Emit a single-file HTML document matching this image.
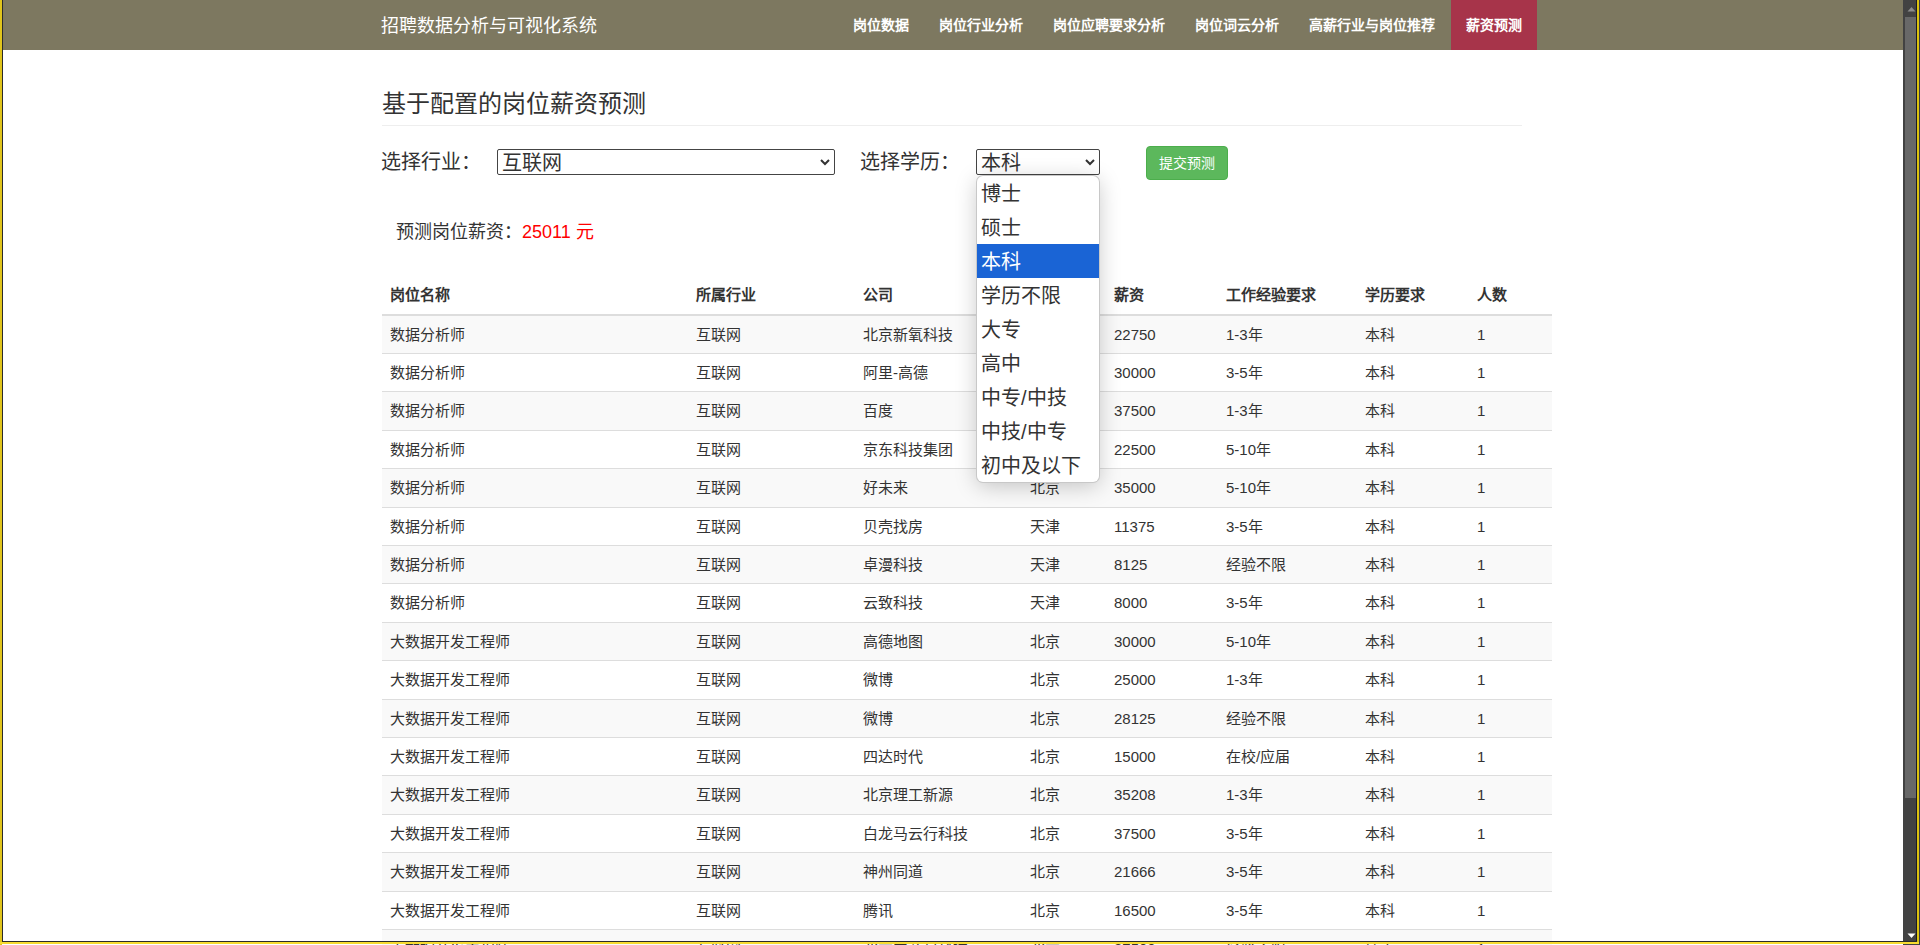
<!DOCTYPE html>
<html lang="zh-CN">
<head>
<meta charset="utf-8">
<style>
html,body{margin:0;padding:0;}
body{width:1920px;height:945px;overflow:hidden;position:relative;background:#fff;font-family:"Liberation Sans",sans-serif;color:#333;}
.abs{position:absolute;white-space:nowrap;}
#nav{position:absolute;left:3px;top:0;width:1900px;height:50px;background:#7d7860;}
.brand{position:absolute;left:381px;top:13.5px;font-size:18px;line-height:24px;color:#fff;}
.ni{position:absolute;top:0;height:50px;line-height:51px;font-size:14px;font-weight:bold;color:#fff;}
.ni.act{background:#a7344a;}
.title{position:absolute;left:382px;top:89px;font-size:24px;line-height:30px;color:#333;}
.hr{position:absolute;left:382px;top:125px;width:1140px;height:1px;background:#eee;}
.lbl{position:absolute;font-size:20px;line-height:26px;color:#333;margin-top:1px;}
.sel{position:absolute;box-sizing:border-box;height:26px;border:1px solid #444;border-radius:2px;background:#fff;font-size:20px;line-height:26px;padding-left:4px;color:#333;}
.chev{position:absolute;right:4px;top:8px;}
.btn{position:absolute;left:1146px;top:146px;width:82px;height:34px;box-sizing:border-box;border:1px solid #4cae4c;background:#5cb85c;border-radius:4px;color:#fff;font-size:14px;line-height:32px;text-align:center;}
.pred{position:absolute;left:396px;top:218.7px;font-size:18px;line-height:26px;color:#333;}
.pred span{color:#f00;}
table{position:absolute;left:382px;top:276.1px;width:1170px;border-collapse:collapse;border-spacing:0;font-size:15px;line-height:21.4px;}
th{text-align:left;font-weight:bold;padding:8px;border-bottom:2px solid #ddd;vertical-align:bottom;}
td{padding:8px;border-top:1px solid #ddd;vertical-align:top;}
tbody tr:nth-child(odd) td{background:#f9f9f9;}
#dd{position:absolute;left:977px;top:176px;width:122px;height:306px;box-sizing:border-box;background:#fff;border-radius:6px;box-shadow:0 0 0 1px #c8c8c8,0 4px 22px rgba(0,0,0,0.22);overflow:hidden;}
#dd div{height:34px;line-height:36px;font-size:20px;padding-left:4px;color:#333;}
#dd div.hl{background:#1a64d5;color:#fff;}
#frame-l{position:absolute;left:0;top:0;width:2px;height:945px;background:#e0c41c;}
#frame-l2{position:absolute;left:2px;top:0;width:1px;height:942px;background:#2a2a2a;}
#frame-b{position:absolute;left:0;top:942px;width:1919px;height:2px;background:#f8dc30;}
#frame-b2{position:absolute;left:2px;top:941px;width:1915px;height:1px;background:#2a2a2a;}
#frame-r{position:absolute;left:1917px;top:0;width:2px;height:944px;background:#dcc20e;}
#frame-r2{position:absolute;left:1916px;top:0;width:1px;height:942px;background:#1a1a22;}
#frame-r3{position:absolute;left:1919px;top:0;width:1px;height:945px;background:#3a3a44;}
#sb{position:absolute;left:1903px;top:0;width:17px;height:945px;background:#424242;}
#thumb{position:absolute;left:1905px;top:17px;width:13px;height:781px;background:#686868;}
#up{position:absolute;left:1907px;top:6px;}
#down{position:absolute;left:1907px;top:933px;}
</style>
</head>
<body>
<div id="nav">
</div>
<div class="brand abs">招聘数据分析与可视化系统</div>
<div class="ni abs" style="left:838px;padding:0 15px;">岗位数据</div>
<div class="ni abs" style="left:924px;padding:0 15px;">岗位行业分析</div>
<div class="ni abs" style="left:1038px;padding:0 15px;">岗位应聘要求分析</div>
<div class="ni abs" style="left:1180px;padding:0 15px;">岗位词云分析</div>
<div class="ni abs" style="left:1294px;padding:0 15px;">高薪行业与岗位推荐</div>
<div class="ni abs act" style="left:1451px;padding:0 15px;width:56px;">薪资预测</div>

<div class="title abs">基于配置的岗位薪资预测</div>
<div class="hr"></div>

<div class="lbl abs" style="left:381px;top:148px;">选择行业：</div>
<div class="sel abs" style="left:497px;top:149px;width:338px;">互联网<svg class="chev" width="10" height="8" viewBox="0 0 10 8"><path d="M1 2 L5 6 L9 2" stroke="#333" stroke-width="2" fill="none"/></svg></div>
<div class="lbl abs" style="left:860px;top:148px;">选择学历：</div>
<div class="sel abs" style="left:976px;top:149px;width:124px;">本科<svg class="chev" width="10" height="8" viewBox="0 0 10 8"><path d="M1 2 L5 6 L9 2" stroke="#333" stroke-width="2" fill="none"/></svg></div>
<div class="btn">提交预测</div>

<div class="pred abs">预测岗位薪资：<span>25011 元</span></div>

<table>
<colgroup><col style="width:306px"><col style="width:167px"><col style="width:167px"><col style="width:84px"><col style="width:112px"><col style="width:139px"><col style="width:112px"><col style="width:83px"></colgroup>
<thead><tr><th>岗位名称</th><th>所属行业</th><th>公司</th><th>城市</th><th>薪资</th><th>工作经验要求</th><th>学历要求</th><th>人数</th></tr></thead>
<tbody>
<tr><td>数据分析师</td><td>互联网</td><td>北京新氧科技</td><td>北京</td><td>22750</td><td>1-3年</td><td>本科</td><td>1</td></tr>
<tr><td>数据分析师</td><td>互联网</td><td>阿里-高德</td><td>北京</td><td>30000</td><td>3-5年</td><td>本科</td><td>1</td></tr>
<tr><td>数据分析师</td><td>互联网</td><td>百度</td><td>北京</td><td>37500</td><td>1-3年</td><td>本科</td><td>1</td></tr>
<tr><td>数据分析师</td><td>互联网</td><td>京东科技集团</td><td>北京</td><td>22500</td><td>5-10年</td><td>本科</td><td>1</td></tr>
<tr><td>数据分析师</td><td>互联网</td><td>好未来</td><td>北京</td><td>35000</td><td>5-10年</td><td>本科</td><td>1</td></tr>
<tr><td>数据分析师</td><td>互联网</td><td>贝壳找房</td><td>天津</td><td>11375</td><td>3-5年</td><td>本科</td><td>1</td></tr>
<tr><td>数据分析师</td><td>互联网</td><td>卓漫科技</td><td>天津</td><td>8125</td><td>经验不限</td><td>本科</td><td>1</td></tr>
<tr><td>数据分析师</td><td>互联网</td><td>云致科技</td><td>天津</td><td>8000</td><td>3-5年</td><td>本科</td><td>1</td></tr>
<tr><td>大数据开发工程师</td><td>互联网</td><td>高德地图</td><td>北京</td><td>30000</td><td>5-10年</td><td>本科</td><td>1</td></tr>
<tr><td>大数据开发工程师</td><td>互联网</td><td>微博</td><td>北京</td><td>25000</td><td>1-3年</td><td>本科</td><td>1</td></tr>
<tr><td>大数据开发工程师</td><td>互联网</td><td>微博</td><td>北京</td><td>28125</td><td>经验不限</td><td>本科</td><td>1</td></tr>
<tr><td>大数据开发工程师</td><td>互联网</td><td>四达时代</td><td>北京</td><td>15000</td><td>在校/应届</td><td>本科</td><td>1</td></tr>
<tr><td>大数据开发工程师</td><td>互联网</td><td>北京理工新源</td><td>北京</td><td>35208</td><td>1-3年</td><td>本科</td><td>1</td></tr>
<tr><td>大数据开发工程师</td><td>互联网</td><td>白龙马云行科技</td><td>北京</td><td>37500</td><td>3-5年</td><td>本科</td><td>1</td></tr>
<tr><td>大数据开发工程师</td><td>互联网</td><td>神州同道</td><td>北京</td><td>21666</td><td>3-5年</td><td>本科</td><td>1</td></tr>
<tr><td>大数据开发工程师</td><td>互联网</td><td>腾讯</td><td>北京</td><td>16500</td><td>3-5年</td><td>本科</td><td>1</td></tr>
<tr><td>大数据开发工程师</td><td>互联网</td><td>北京中关村科技</td><td>北京</td><td>87500</td><td>经验不限</td><td>硕士</td><td>1</td></tr>
</tbody>
</table>

<div id="dd">
<div>博士</div><div>硕士</div><div class="hl">本科</div><div>学历不限</div><div>大专</div><div>高中</div><div>中专/中技</div><div>中技/中专</div><div>初中及以下</div>
</div>

<div id="sb"></div>
<div id="thumb"></div>
<svg id="up" width="9" height="6" viewBox="0 0 9 6"><path d="M0.5 5.5 L4.5 1 L8.5 5.5 Z" fill="#8c8c8c"/></svg>
<svg id="down" width="9" height="6" viewBox="0 0 9 6"><path d="M0.5 0.5 L4.5 5 L8.5 0.5 Z" fill="#ffffff"/></svg>
<div id="frame-l"></div>
<div id="frame-l2"></div>
<div id="frame-r2"></div>
<div id="frame-r"></div>
<div id="frame-r3"></div>
<div id="frame-b2"></div>
<div id="frame-b"></div>
</body>
</html>
